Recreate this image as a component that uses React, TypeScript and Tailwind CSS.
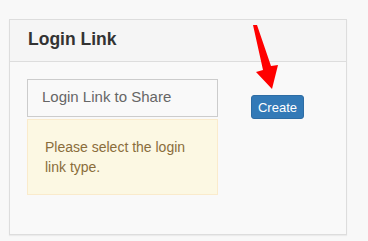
import React from "react";

export default function App() {
  return (
    <div
      className="relative w-[368px] h-[241px] bg-[#f8f8f8] pl-[9px] pt-[19px] overflow-hidden"
      style={{ fontFamily: '"Liberation Sans", Arial, sans-serif' }}
    >
      <div className="w-[338px] h-[216px] border border-[#dddddd] bg-[#f9f9f9] shadow-[0_1px_1px_rgba(0,0,0,0.05)] flex flex-col">
        <div className="h-[42px] border-b border-[#dddddd] bg-[#f5f5f5] pl-[18px] pt-[9px]">
          <div className="text-[17.5px] leading-[20px] font-bold text-[#333333]">Login Link</div>
        </div>
        <div className="flex items-start pl-[17px] pt-[17px]">
          <div className="w-[191px] flex flex-col gap-[2px]">
            <div className="h-[38px] border border-[#cccccc] bg-[#f9f9f9] flex items-center pl-[14px] pb-[2px] text-[15px] text-[#666666]">
              Login Link to Share
            </div>
            <div className="border border-[#faebcc] bg-[#fcf8e3] p-[17px] text-[14px] leading-[20px] text-[#8a6d3b]">
              Please select the login link type.
            </div>
          </div>
          <button className="ml-[33px] mt-[16px] w-[53px] h-[24px] rounded-[3px] bg-[#337ab7] border border-[#2e6da4] text-white text-[13px] leading-none flex items-center justify-center">
            Create
          </button>
        </div>
      </div>
      <svg
        className="absolute left-0 top-0 pointer-events-none"
        width="368"
        height="241"
        viewBox="0 0 368 241"
      >
        <polygon
          points="253,25 257,25 271,66 278,65 272,89 256,72 263,70"
          fill="#ff0000"
        />
      </svg>
    </div>
  );
}
